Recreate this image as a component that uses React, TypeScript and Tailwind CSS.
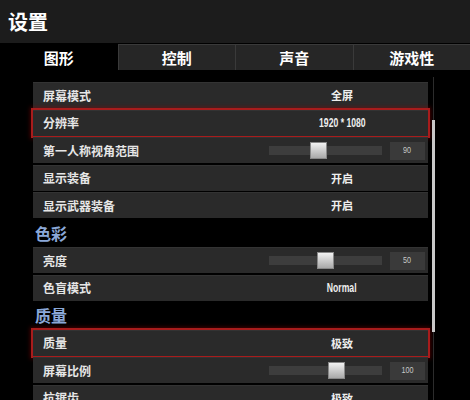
import React from "react";

type Item =
  | { kind: "heading"; label: string }
  | { kind: "value"; label: string; value: string; latin?: boolean; hl?: boolean }
  | { kind: "slider"; label: string; value: string; thumb: number; hl?: boolean };

const items: Item[] = [
  { kind: "value", label: "屏幕模式", value: "全屏" },
  { kind: "value", label: "分辨率", value: "1920 * 1080", latin: true, hl: true },
  { kind: "slider", label: "第一人称视角范围", value: "90", thumb: 41 },
  { kind: "value", label: "显示装备", value: "开启" },
  { kind: "value", label: "显示武器装备", value: "开启" },
  { kind: "heading", label: "色彩" },
  { kind: "slider", label: "亮度", value: "50", thumb: 48 },
  { kind: "value", label: "色盲模式", value: "Normal", latin: true },
  { kind: "heading", label: "质量" },
  { kind: "value", label: "质量", value: "极致", hl: true },
  { kind: "slider", label: "屏幕比例", value: "100", thumb: 59 },
  { kind: "value", label: "抗锯齿", value: "极致" },
];

const tabs = ["图形", "控制", "声音", "游戏性"];

function Row({ item }: { item: Item }) {
  if (item.kind === "heading") {
    return (
      <div className="h-[26px] shrink-0 flex items-center pl-[2px] text-[16px] font-bold text-[#8ba8d8] leading-none">
        {item.label}
      </div>
    );
  }
  const hl = item.hl
    ? "shadow-[0_0_0_2px_#a81c1c,0_0_4px_3px_rgba(150,0,0,0.45)]"
    : "";
  return (
    <div
      className={`h-[26px] shrink-0 flex items-center bg-[#2a2a2a] border-t border-[#333333] ${hl}`}
    >
      <div className="flex-1 pl-[10px] text-[12px] font-bold text-[#e6e6e6] leading-none">
        {item.label}
      </div>
      {item.kind === "value" ? (
        <div className="w-[172px] flex justify-center items-center text-[11px] font-bold text-[#eeeeee] leading-none">
          {item.latin ? (
            <span className="inline-block scale-x-[0.72] text-[12px] font-['Liberation_Sans',sans-serif] whitespace-nowrap">
              {item.value}
            </span>
          ) : (
            item.value
          )}
        </div>
      ) : (
        <div className="w-[172px] flex items-center pl-[13px] pr-[3px] gap-[8px]">
          <div className="relative w-[113px] h-[9px] bg-[#3d3d3d]">
            <div
              className="absolute top-[-4px] w-[17px] h-[17px] bg-gradient-to-b from-[#f2f2f2] to-[#a9a9a9] border border-[#888]"
              style={{ left: item.thumb }}
            />
          </div>
          <div className="w-[35px] h-[18px] bg-[#3a3a3a] flex items-center justify-center">
            <span className="inline-block scale-x-[0.8] text-[9px] font-['Liberation_Sans',sans-serif] text-[#c8c8c8] leading-none">
              {item.value}
            </span>
          </div>
        </div>
      )}
    </div>
  );
}

export default function App() {
  return (
    <div className="w-[470px] h-[400px] bg-black overflow-hidden relative font-['Noto_Sans_CJK_SC','Noto_Sans',sans-serif]">
      <div className="h-[43px] bg-[#1c1c1c] flex items-center pl-[8px] text-[20px] font-bold text-white leading-none">
        设置
      </div>
      <div className="mt-[1px] h-[26px] grid grid-cols-4">
        {tabs.map((t, i) => (
          <div
            key={t}
            className={
              i === 0
                ? "flex items-center justify-center bg-black text-[15px] font-bold text-white leading-none"
                : "flex items-center justify-center bg-[#262626] border-l border-t border-[#3a3a3a] text-[15px] font-bold text-white leading-none"
            }
          >
            {t}
          </div>
        ))}
      </div>
      <div className="mt-[12px] ml-[33px] w-[395px] flex flex-col gap-[1.5px]">
        {items.map((it, i) => (
          <Row key={i} item={it} />
        ))}
      </div>
      <div className="absolute left-[433px] top-[77px] bottom-0 w-[1px] bg-[#2c2c2c]" />
      <div className="absolute left-[432px] top-[120px] h-[212px] w-[3px] bg-[#c9c9c9]" />
    </div>
  );
}
